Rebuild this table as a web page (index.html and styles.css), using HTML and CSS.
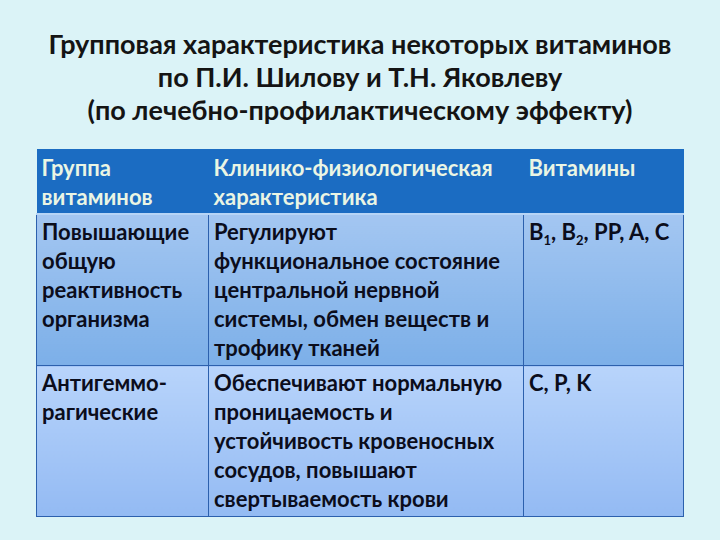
FILE: index.html
```html
<!DOCTYPE html>
<html lang="ru">
<head>
<meta charset="utf-8">
<title>Групповая характеристика витаминов</title>
<link rel="stylesheet" href="styles.css">
</head>
<body>
<div class="slide">
  <h1 class="title">Групповая характеристика некоторых витаминов<br>по П.И. Шилову и Т.Н. Яковлеву<br>(по лечебно-профилактическому эффекту)</h1>
  <table class="vit">
    <thead>
      <tr>
        <th class="c1">Группа<br>витаминов</th>
        <th class="c2">Клинико-физиологическая<br>характеристика</th>
        <th class="c3">Витамины</th>
      </tr>
    </thead>
    <tbody>
      <tr class="r1">
        <td>Повышающие<br>общую<br>реактивность<br>организма</td>
        <td>Регулируют<br>функциональное состояние<br>центральной нервной<br>системы, обмен веществ и<br>трофику тканей</td>
        <td>B<sub>1</sub>, B<sub>2</sub>, PP, A, C</td>
      </tr>
      <tr class="r2">
        <td>Антигеммо-<br>рагические</td>
        <td>Обеспечивают нормальную<br>проницаемость и<br>устойчивость кровеносных<br>сосудов, повышают<br>свертываемость крови</td>
        <td>C, P, K</td>
      </tr>
    </tbody>
  </table>
</div>
</body>
</html>
```
FILE: styles.css
```css
html, body {
  margin: 0;
  padding: 0;
  background: #dbf3f7;
}
.slide {
  width: 720px;
  height: 540px;
  padding-top: 27px;
  box-sizing: border-box;
  font-family: "Lato", "Open Sans", sans-serif;
  font-weight: 700;
}
.title {
  margin: 0 0 23px;
  text-align: center;
  font-size: 27px;
  line-height: 33px;
  font-weight: 700;
  color: #141414;
}
.vit {
  width: 648px;
  margin: 0 auto;
  border-collapse: collapse;
  font-size: 22px;
  line-height: 29px;
}
.vit th, .vit td {
  text-align: left;
  vertical-align: top;
  padding: 4px 4px 2px 5px;
  white-space: nowrap;
}
.vit td {
  padding-top: 2px;
  padding-bottom: 3px;
}
.vit th {
  background: #1b6cc2;
  color: #eaf5e4;
  font-weight: 700;
  border-bottom: 2px solid #b7d5f6;
}
.vit .c1 { width: 163px; }
.vit .c2 { width: 306px; }
.vit td {
  color: #0b0d1c;
  border: 1px solid #2c60ad;
}
.vit .r1 td {
  background: linear-gradient(#a3c6f1, #7cafe8);
}
.vit .r2 td {
  background: linear-gradient(#b8d4fb, #93baf3);
}
.vit sub {
  font-size: 13px;
  line-height: 0;
  vertical-align: -5px;
}
```
